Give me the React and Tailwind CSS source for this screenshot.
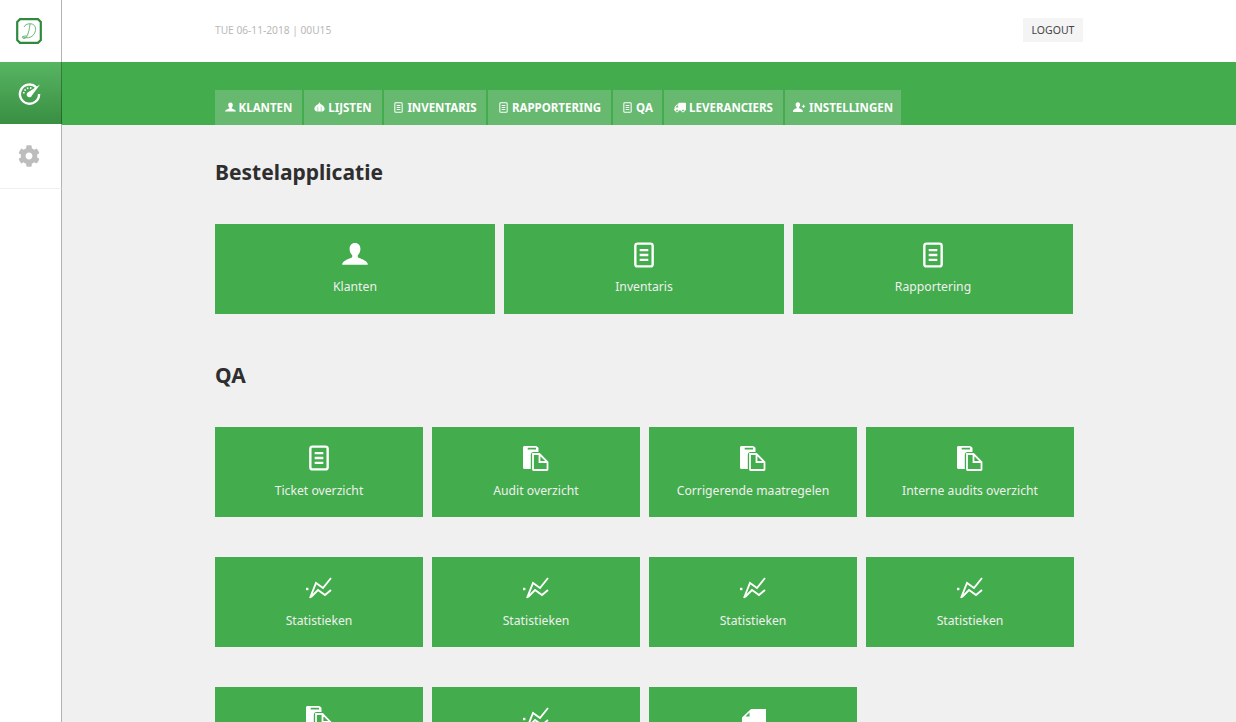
import React from 'react';
import { FaCog, FaTruck } from 'react-icons/fa';

const tabs = [
  { label: 'KLANTEN', icon: 'user', width: 'w-[87px]' },
  { label: 'LIJSTEN', icon: 'onion', width: 'w-[78px]' },
  { label: 'INVENTARIS', icon: 'doc', width: 'w-[102px]' },
  { label: 'RAPPORTERING', icon: 'doc', width: 'w-[123px]' },
  { label: 'QA', icon: 'doc', width: 'w-[49px]' },
  { label: 'LEVERANCIERS', icon: 'truck', width: 'w-[119px]' },
  { label: 'INSTELLINGEN', icon: 'userPlus', width: 'w-[116px]' },
];

const firstRow = [
  { label: 'Klanten', icon: 'user' },
  { label: 'Inventaris', icon: 'doc' },
  { label: 'Rapportering', icon: 'doc' },
];

// last row is cut off by the window, its labels are never in view
const qaRows = [
  { label: 'Ticket overzicht', icon: 'doc' },
  { label: 'Audit overzicht', icon: 'copy' },
  { label: 'Corrigerende maatregelen', icon: 'copy' },
  { label: 'Interne audits overzicht', icon: 'copy' },
  { label: 'Statistieken', icon: 'chart' },
  { label: 'Statistieken', icon: 'chart' },
  { label: 'Statistieken', icon: 'chart' },
  { label: 'Statistieken', icon: 'chart' },
  { icon: 'copy' },
  { icon: 'chart' },
  { icon: 'file' },
];

const UserIcon = ({ className }) => (
  <svg viewBox="0 0 24 24" className={className} fill="currentColor">
    <path d="M12 1c3.200 0 5 2.300 5 5.400 0 2.200-.9 4.300-2.200 5.600-.5.500-.5 1.700.2 2.200 1.300.9 7.500 2.300 8.800 5.800v.9H.2V20c1.300-3.500 7.500-4.900 8.800-5.800.7-.5.7-1.700.2-2.200C7.900 10.700 7 8.600 7 6.400 7 3.300 8.800 1 12 1z" />
  </svg>
);

const DocIcon = ({ className }) => (
  <svg viewBox="0 0 24 24" className={className} fill="none" stroke="currentColor" strokeWidth="2.200">
    <rect x="4" y="1.500" width="16" height="21" rx="2" />
    <path d="M8 7.500h8M8 12h8M8 16.500h8" />
  </svg>
);

const CopyIcon = ({ className }) => (
  <svg viewBox="0 0 26 26" className={className}>
    <path fill="currentColor" fillRule="evenodd" d="M0 2.500C0 1.700.7 1 1.500 1h11C14 1 15 2 15.500 3v4H10.500C9 7 7.800 8.200 7.800 9.700V24H1.500C.7 24 0 23.300 0 22.500zM4.700 2.800v1.600h8.300V2.800z" />
    <path fill="none" stroke="currentColor" strokeWidth="1.800" d="M10 9h6.500l8 8v7.500c0 .3-.2.500-.5.500H10.500c-.3 0-.5-.2-.5-.5zM16.500 9v8h8" />
  </svg>
);

const ChartIcon = ({ className }) => (
  <svg viewBox="0 0 26 26" className={className} fill="none" stroke="currentColor" strokeWidth="1.900">
    <path d="M4 23 10 8l7 5 8-10M5 22l7-7 7 5 6-5" />
    <path d="M0 14h2.400" strokeWidth="2.400" />
  </svg>
);

const FileIcon = ({ className }) => (
  <svg viewBox="0 0 26 26" className={className}>
    <path fill="currentColor" fillRule="evenodd" d="M11 4h15v20H2V12.500zM9.500 7.500l-4 4h4z" />
  </svg>
);

const OnionIcon = ({ className }) => (
  <svg viewBox="0 0 14 14" className={className} fill="currentColor">
    <path d="M7 0c.3 1.500 1 2.300 2.800 3.600C12 5 13.500 6.500 13.500 8.500c0 2-1.500 3.500-3 3.500H4C2.500 12 .5 10.500.5 8.500c0-2 1.500-3.500 3.700-4.900C6 2.300 6.700 1.500 7 0z" />
    <path d="M4.800 6v6M9.200 6v6" stroke="#66b96f" strokeWidth=".7" fill="none" />
  </svg>
);

const UserPlusIcon = ({ className }) => (
  <svg viewBox="0 0 16 13" className={className} fill="currentColor">
    <path d="M6 0c1.800 0 2.800 1.300 2.800 3 0 1.200-.5 2.300-1.200 3-.3.300-.3 1 .1 1.300C8.400 7.800 11.300 8.600 12 10.500V12H0v-1.500c.7-1.900 3.600-2.700 4.300-3.200.4-.3.400-1 .1-1.300C3.700 5.300 3.200 4.200 3.200 3 3.200 1.300 4.200 0 6 0z" />
    <path d="M11 5h4M13 3v4" stroke="currentColor" strokeWidth="1.200" />
  </svg>
);

const GaugeIcon = () => (
  <svg viewBox="0 0 24 24" className="h-[23px] w-[23px] text-white" fill="none" stroke="currentColor">
    <path d="M19 5.500A10 10 0 1 0 22 12.500" strokeWidth="2.500" />
    <path d="M6 12a6 6 0 0 1 8-5.500" strokeWidth="1.800" strokeDasharray="1.600 1.600" />
    <path fill="currentColor" stroke="none" d="M23 2.500 11 10.500a2.800 2.800 0 1 0 3.500 3.500z" />
  </svg>
);

const Logo = () => (
  <svg viewBox="0 0 26 26" className="h-[26px] w-[26px]" fill="none">
    <path d="M4 1.200h18L24.800 4v18L22 24.800H4L1.200 22V4z" stroke="#2f8a3d" strokeWidth="2.200" />
    <path
      d="M8 9c1-2.500 4-3.500 7-3.200 3.500.4 5 3.500 4.500 6.700-.6 3.800-3.600 6.800-7 7.200-2.200.3-4.300-.3-5.700-.9 1.200-.9 2.700-1 4.200-.5M14 6c-.3 4-1.500 9.500-3.400 12.800C10 19.800 8.600 21 7 20.200c-1-.5-.7-1.700.2-1.900"
      stroke="#5cad67"
      strokeWidth=".9"
    />
  </svg>
);

const icons = {
  user: UserIcon,
  doc: DocIcon,
  copy: CopyIcon,
  chart: ChartIcon,
  file: FileIcon,
  onion: OnionIcon,
  truck: FaTruck,
  userPlus: UserPlusIcon,
};

const SideCell = ({ className, children }) => (
  <div className={`flex w-[62px] items-center justify-center border-r border-black/30 pr-[3px] ${className}`}>
    {children}
  </div>
);

const Tab = ({ label, icon, width }) => {
  const Icon = icons[icon];
  return (
    <div className={`flex h-[35px] items-center justify-center gap-[3px] bg-[#66b96f] text-[11.500px] font-bold text-white ${width}`}>
      <Icon className={`shrink-0 ${icon === 'truck' ? 'h-[11px] w-[12px] -scale-x-100' : icon === 'userPlus' ? 'h-[11px] w-[13px]' : 'h-[11px] w-[11px]'}`} />
      <span>{label}</span>
    </div>
  );
};

const Tile = ({ label, icon, labelClass = 'leading-[20px]' }) => {
  const Icon = icons[icon];
  return (
    <div className="flex h-[90px] flex-col items-center bg-[#43ac4c] pt-[18px] text-white">
      <Icon className="h-[26px] w-[26px]" />
      {label && <span className={`mt-[10px] text-[12.200px] text-[#f0f0f0] ${labelClass}`}>{label}</span>}
    </div>
  );
};

export default function App() {
  return (
    <div className="flex h-screen overflow-hidden bg-[#f0f0f0] font-['Noto_Sans',sans-serif]">
      <aside className="flex w-[62px] shrink-0 flex-col bg-white">
        <SideCell className="h-[62px]">
          <Logo />
        </SideCell>
        <SideCell className="h-[62px] bg-gradient-to-b from-[#57b562] to-[#398f42]">
          <GaugeIcon />
        </SideCell>
        <div className="flex h-[65px] w-[62px] items-center justify-center border-r border-b border-r-black/30 border-b-[#eeeeee] pr-[3px]">
          <FaCog className="h-[22px] w-[22px] text-[#bdbdbd]" />
        </div>
        <SideCell className="flex-1" />
      </aside>

      <div className="min-w-0 flex-1">
        <header className="flex h-[62px] items-center justify-between bg-white pb-[2px] pl-[153px] pr-[153px]">
          <span className="pt-[2px] text-[10.200px] text-[#b8b8b8]">TUE 06-11-2018 | 00U15</span>
          <button className="h-6 w-[60px] bg-[#f4f4f4] pt-[2px] text-[10.500px] text-[#444444]">LOGOUT</button>
        </header>

        <nav className="flex h-[63px] items-end gap-[2px] bg-[#43ac4c] pl-[153px]">
          {tabs.map((tab) => (
            <Tab key={tab.label} {...tab} />
          ))}
        </nav>

        <main className="pl-[153px]">
          <h2 className="mt-[32px] mb-[37px] text-[21px] font-bold leading-[30px] text-[#2e2e2e]">Bestelapplicatie</h2>
          <div className="grid w-[858px] grid-cols-3 gap-[9px]">
            {firstRow.map((item) => (
              <Tile key={item.label} {...item} labelClass="leading-[18px]" />
            ))}
          </div>

          <h2 className="mt-[46px] mb-[37px] text-[21px] font-bold leading-[30px] text-[#2e2e2e]">QA</h2>
          <div className="grid w-[859px] grid-cols-4 gap-x-[9px] gap-y-[40px]">
            {qaRows.map((item, index) => (
              <Tile key={index} {...item} />
            ))}
          </div>
        </main>
      </div>
    </div>
  );
}
